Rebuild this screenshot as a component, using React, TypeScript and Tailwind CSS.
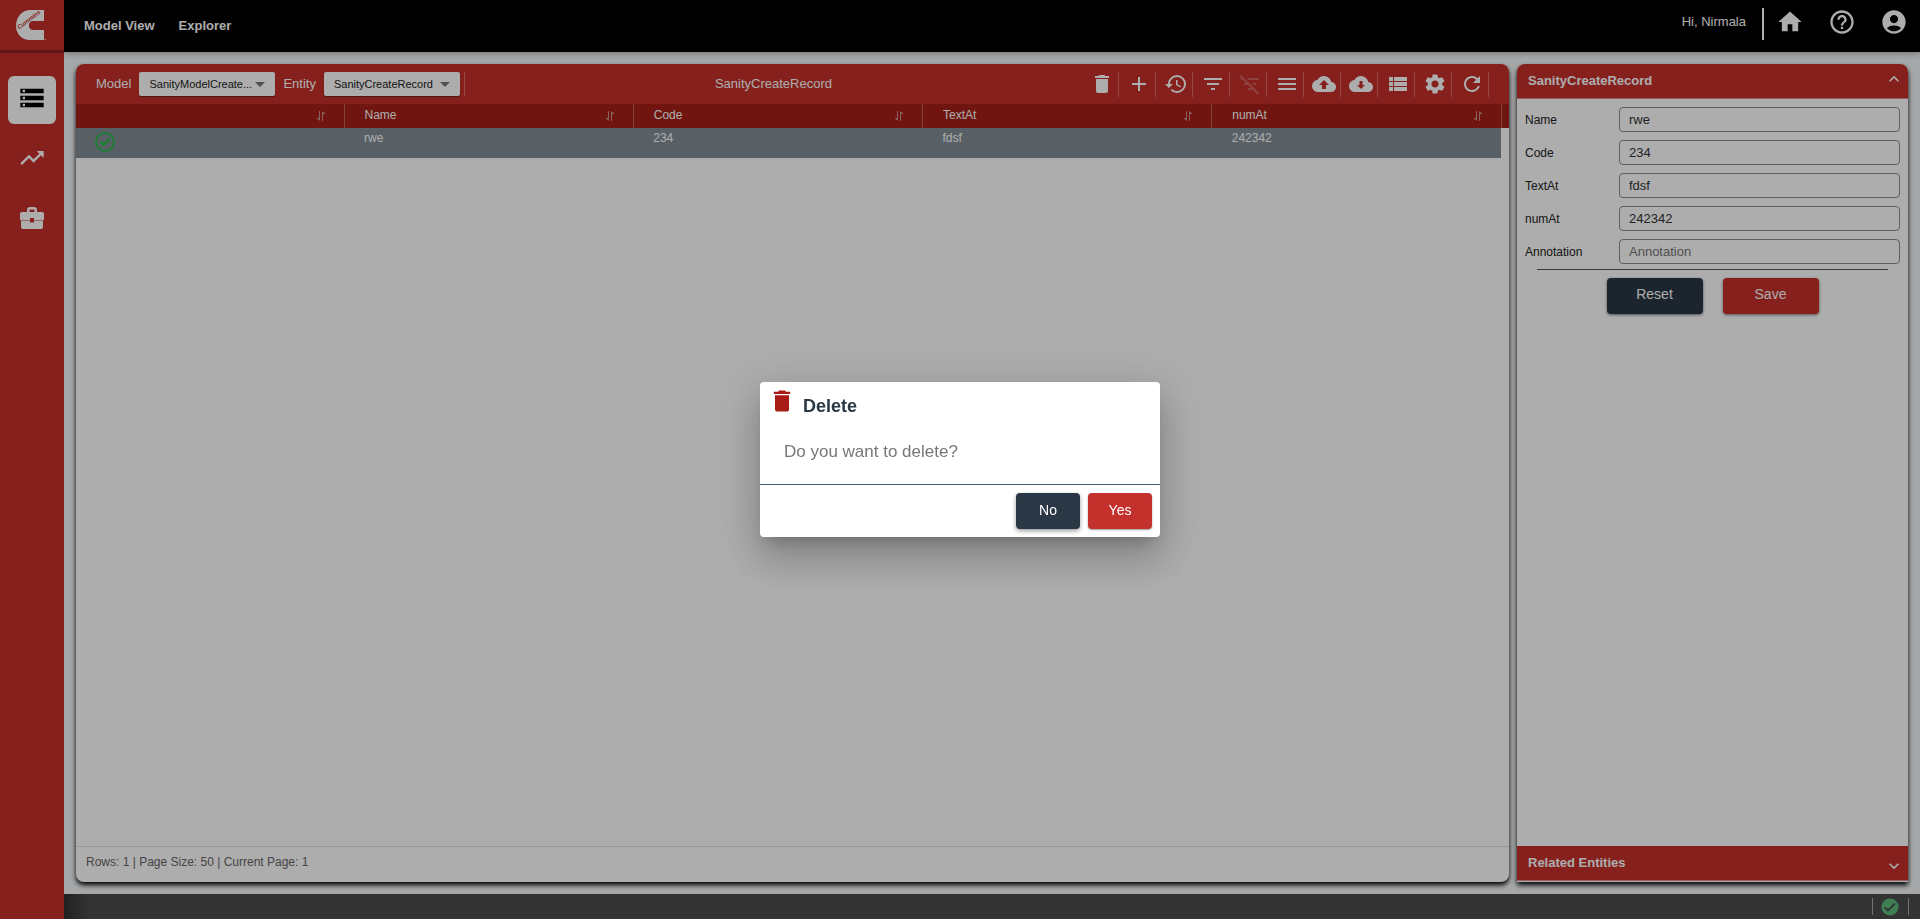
import React from "react";
import {
  MdDelete, MdAdd, MdHistory, MdFilterList, MdFilterListOff, MdMenu, MdBackup, MdViewList,
  MdSettings, MdRefresh, MdStorage, MdTrendingUp, MdHome, MdHelpOutline, MdAccountCircle,
  MdArrowDropDown, MdKeyboardArrowUp, MdKeyboardArrowDown,
} from "react-icons/md";

const tools = [
  { label: "Delete", Icon: MdDelete },
  { label: "Add", Icon: MdAdd },
  { label: "History", Icon: MdHistory },
  { label: "Filter", Icon: MdFilterList },
  { label: "Clear filter", Icon: MdFilterListOff, disabled: true },
  { label: "Menu", Icon: MdMenu },
  { label: "Upload", Icon: MdBackup },
  { label: "Download", Icon: CloudDown },
  { label: "List view", Icon: MdViewList },
  { label: "Settings", Icon: MdSettings },
  { label: "Refresh", Icon: MdRefresh },
];

const fields = [
  { name: "Name", value: "rwe" },
  { name: "Code", value: "234" },
  { name: "TextAt", value: "fdsf" },
  { name: "numAt", value: "242342" },
  { name: "Annotation", value: "" },
];

function CloudDown({ className }: { className?: string }) {
  return (
    <svg viewBox="0 0 24 24" fill="currentColor" className={className}>
      <path fillRule="evenodd" d="M19.35 10.04A7.49 7.49 0 0 0 12 4C9.11 4 6.6 5.64 5.35 8.04A5.994 5.994 0 0 0 0 14c0 3.31 2.69 6 6 6h13c2.76 0 5-2.24 5-5 0-2.64-2.05-4.78-4.65-4.96zM8 13h2.5V9h3v4H16l-4 4-4-4z" />
    </svg>
  );
}

function Logo() {
  return (
    <svg viewBox="0 0 30 30" className="size-[30px] overflow-visible" role="img" aria-label="Cummins">
      <path fill="#fff" d="M28 0v11H17.500a4.500 4.500 0 0 0-4.500 4.300v.4a4.500 4.500 0 0 0 4.500 4.300H28v10H13.500A13.500 14 0 0 1 0 16C0 7 6 0 14 0z" />
      <text x="3" y="19.500" transform="rotate(-37 3 19.500)" fill="#c4302b" className="text-[6px] font-bold italic">Cummins</text>
      <circle cx="29.300" cy="29.300" r=".6" fill="#fff" />
    </svg>
  );
}

function SortIcon() {
  return (
    <svg viewBox="0 0 10 10" className="size-[10px]" fill="none" stroke="#c98f8c" strokeWidth="1">
      <path d="M3.500 0v9.500M1 7.500h2.500M2 8.500h2M6.500 10V.5M6.500 2.500H9M6 1.500h2" />
    </svg>
  );
}

function Picker({ id, label, value }: { id: string; label: string; value: string }) {
  return (
    <div className="flex items-center">
      <label htmlFor={id} className="text-[13px] text-white">{label}</label>
      <div className="relative ml-2 w-[136px]">
        <select id={id} className="block h-6 w-full appearance-none rounded-xs bg-white pr-5 pl-2.5 text-[11px] text-[#222] shadow-[0_1px_1px_#0006]">
          <option>{value}</option>
        </select>
        <MdArrowDropDown className="pointer-events-none absolute top-0 right-[3px] size-6 text-[#777]" />
      </div>
    </div>
  );
}

export default function App() {
  const [open, setOpen] = React.useState(true);
  return (
    <div className="flex h-screen bg-[#f4f7fa] font-['Liberation_Sans',Arial,sans-serif] text-[#2a3744]">
      <aside className="z-10 flex w-16 shrink-0 flex-col bg-[#c4302b] text-white">
        <div className="flex h-[53px] justify-center border-b-3 border-[#8f2320] pt-2.5 pr-0.5"><Logo /></div>
        <nav className="flex flex-col items-center gap-3 pt-[23px]">
          <button aria-label="Models" className="flex size-12 justify-center rounded-md bg-white pt-2 text-black"><MdStorage className="size-7" /></button>
          <button aria-label="Trends" className="flex size-12 justify-center pt-2"><MdTrendingUp className="size-7" /></button>
          <button aria-label="Business" className="flex size-12 justify-center pt-2">
            <svg viewBox="0 0 24 22" className="mt-[3px] h-[22px] w-6" fill="currentColor">
              <path fillRule="evenodd" d="M7 5V3a3 3 0 0 1 3-3h4a3 3 0 0 1 3 3v2h5a2 2 0 0 1 2 2v5a1.500 1.500 0 0 1-1.500 1.500H14V11h-4v2.500H1.500A1.500 1.500 0 0 1 0 12V7a2 2 0 0 1 2-2zm2.500 0h5V3.500a1 1 0 0 0-1-1h-3a1 1 0 0 0-1 1zM1 14h9v1.500h4V14h9v6a2 2 0 0 1-2 2H3a2 2 0 0 1-2-2z" />
            </svg>
          </button>
        </nav>
      </aside>

      <div className="flex min-w-0 flex-1 flex-col">
        <header className="flex h-[52px] shrink-0 justify-between bg-black pr-3 pl-5 text-white shadow-[0_2px_6px_#0004]">
          <nav className="flex items-center gap-6 pb-px text-[13px] font-bold">
            <a href="#model">Model View</a>
            <a href="#explorer">Explorer</a>
          </nav>
          <div className="flex h-11 items-center">
            <span className="mr-4 text-[13px]">Hi, Nirmala</span>
            <span className="mt-1 mr-3 h-8 w-0.5 bg-white" />
            <div className="flex gap-6">
              <button aria-label="Home"><MdHome className="size-7" /></button>
              <button aria-label="Help"><MdHelpOutline className="size-7" /></button>
              <button aria-label="Account"><MdAccountCircle className="size-7" /></button>
            </div>
          </div>
        </header>

        <div className="flex min-h-0 flex-1 gap-2 p-3">
          <main className="flex min-w-0 flex-1 flex-col rounded-lg bg-white shadow-[0_3px_5px_#000]">
            <div className="flex h-10 shrink-0 items-center justify-between rounded-t-lg bg-[#c4302b] px-5">
              <div className="flex items-center gap-2">
                <Picker id="model" label="Model" value="SanityModelCreate..." />
                <Picker id="entity" label="Entity" value="SanityCreateRecord" />
                <span className="-ml-1 h-6 w-px bg-white/30" />
              </div>
              <h1 className="text-[13px] text-white">SanityCreateRecord</h1>
              <div className="flex">
                {tools.map(({ label, Icon, disabled }) => (
                  <button key={label} aria-label={label} disabled={disabled} className="flex h-[25px] items-center border-r border-white/30 pr-1 pl-2 text-white disabled:text-white/25">
                    <Icon className="size-6" />
                  </button>
                ))}
              </div>
            </div>
            <table className="w-full table-fixed border-collapse text-left text-xs">
              <thead>
                <tr className="h-6 bg-[#a51f17] text-white">
                  {["", "Name", "Code", "TextAt", "numAt"].map((c, i) => (
                    <th key={i} className={i === 0 ? "w-[268px] border-r border-white/30 p-0 font-normal" : "border-r border-white/30 p-0 font-normal"}>
                      <div className="flex items-center justify-between pr-[18px] pl-5"><span className="pb-0.5">{c}</span><SortIcon /></div>
                    </th>
                  ))}
                  <th className="w-2 p-0" />
                </tr>
              </thead>
              <tbody>
                <tr className="h-[30px] align-top text-white">
                  {["", "rwe", "234", "fdsf", "242342"].map((c, i) => (
                    <td key={i} className="bg-[#828e96] pt-0.5 pl-5">
                      {i === 0 ? (
                        <svg viewBox="0 0 20 20" className="mt-0.5 -ml-px size-5" fill="none" stroke="#2cb84f">
                          <circle cx="10" cy="10" r="9" strokeWidth="2" />
                          <path d="M5.500 10 8.500 13l6-6" strokeWidth="2.600" />
                        </svg>
                      ) : c}
                    </td>
                  ))}
                  <td className="p-0" />
                </tr>
              </tbody>
            </table>
            <footer className="mt-auto h-9 shrink-0 border-t border-[#ddd] px-2.5 pt-[7px] text-xs text-[#666]">Rows: 1 | Page Size: 50 | Current Page: 1</footer>
          </main>

          <aside className="flex w-[391px] shrink-0 flex-col rounded-t-lg bg-white shadow-[0_3px_5px_#000]">
            <button className="flex h-[35px] shrink-0 items-start justify-between rounded-t-lg border-b border-[#e0908d] bg-[#c4302b] pt-[9px] pr-1 pl-[11px] text-[13px] leading-4 font-bold text-white">
              SanityCreateRecord<MdKeyboardArrowUp className="-mt-1 size-5" />
            </button>
            <form className="flex flex-1 flex-col px-2 pt-2" onSubmit={(e) => e.preventDefault()}>
              <div className="flex flex-col gap-2">
                {fields.map((f) => (
                  <div key={f.name} className="flex items-center">
                    <label htmlFor={f.name} className="w-[94px] text-xs text-[#222]">{f.name}</label>
                    <input id={f.name} defaultValue={f.value} placeholder={f.name} className="h-[25px] min-w-0 flex-1 rounded-sm border border-[#8c8c8c] bg-white px-[9px] text-[13px] text-[#333] placeholder:text-[#777]" />
                  </div>
                ))}
              </div>
              <hr className="mx-3 mt-[5px] border-[#4c5b68]" />
              <div className="mt-2 flex justify-center gap-5">
                <button type="reset" className="h-9 w-24 rounded bg-[#2a3744] pb-1 text-sm text-white shadow-[0_1px_3px_#0008]">Reset</button>
                <button type="submit" className="h-9 w-24 rounded bg-[#c4302b] pb-1 text-sm text-white shadow-[0_1px_3px_#0008]">Save</button>
              </div>
            </form>
            <button className="mb-px flex h-[35px] shrink-0 items-start justify-between border-b border-[#e0908d] bg-[#c4302b] pt-[9px] pr-1 pl-[11px] text-[13px] leading-4 font-bold text-white">
              Related Entities<MdKeyboardArrowDown className="mt-px size-5" />
            </button>
          </aside>
        </div>

        <footer className="flex h-[25px] shrink-0 items-center justify-end bg-[linear-gradient(to_right,#303030,#4c4c4c_24px)] pr-[11px]">
          <div className="flex h-[17px] items-center border-x border-[#aaa] px-2">
            <svg viewBox="0 0 18 18" className="mr-px size-[18px]" role="img" aria-label="Connected">
              <circle cx="9" cy="9" r="8.500" fill="#5cbb7c" />
              <path d="M3.500 9.300 7 12.500l7-7" fill="none" stroke="#4c4c4c" strokeWidth="1.800" />
            </svg>
          </div>
        </footer>
      </div>

      {open && (
        <div className="fixed inset-0 z-20 flex items-center justify-center bg-black/32">
          <div role="dialog" aria-label="Delete" className="flex w-[400px] flex-col rounded bg-white shadow-[0_11px_15px_-7px_#0003,0_24px_38px_3px_#00000024,0_9px_46px_8px_#0000001f]">
            <div className="flex h-[102px] flex-col">
              <div className="flex gap-[7px] px-2 pt-[5px]">
                <MdDelete className="size-7 text-[#a81e17]" />
                <h2 className="mt-[7px] text-lg leading-6 font-bold">Delete</h2>
              </div>
              <p className="mt-[22px] pl-6 text-[17px] leading-6 text-[#777]">Do you want to delete?</p>
            </div>
            <div className="flex justify-end gap-2 border-t border-[#4c5b68] p-2">
              <button onClick={() => setOpen(false)} className="h-9 w-16 rounded bg-[#2a3744] pb-0.5 text-sm text-white shadow-[0_2px_4px_#0006]">No</button>
              <button onClick={() => setOpen(false)} className="h-9 w-16 rounded bg-[#c4302b] pb-0.5 text-sm text-white shadow-[0_1px_2px_#0006]">Yes</button>
            </div>
          </div>
        </div>
      )}
    </div>
  );
}
